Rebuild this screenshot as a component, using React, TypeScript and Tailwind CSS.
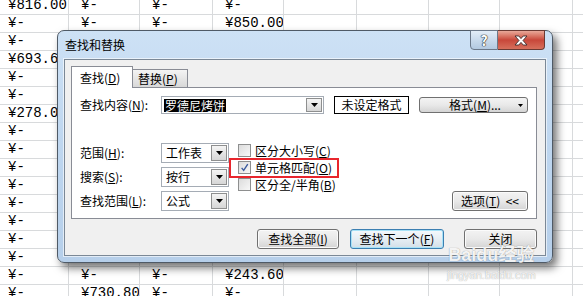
import React from "react";

const colWidths = [69, 71, 73, 71, 73, 72, 71, 73];

// cells behind the dialog are left blank ("")
const sheet: string[][] = [
  ["816.00", "-", "-", "-"],
  ["-", "-", "-", "850.00"],
  ["-", "", "", ""],
  ["693.60", "", "", ""],
  ["-", "", "", ""],
  ["-", "", "", ""],
  ["278.00", "", "", ""],
  ["-", "", "", ""],
  ["-", "", "", ""],
  ["-", "", "", ""],
  ["-", "", "", ""],
  ["-", "", "", ""],
  ["-", "", "", ""],
  ["-", "", "", ""],
  ["-", "", "", ""],
  ["-", "-", "-", "243.60"],
  ["-", "730.80", "-", "-"],
];

// label with accelerator key, e.g. 查找(D)
function Lbl({ t, k, tail }: { t: string; k?: string; tail?: string }) {
  return (
    <span className="whitespace-nowrap">
      <span>{t}</span>
      {k && (
        <>
          <span>(</span>
          <span className="underline underline-offset-1">{k}</span>
          <span>)</span>
        </>
      )}
      {tail && <span>{tail}</span>}
    </span>
  );
}

function DropArrow() {
  return (
    <div className="flex h-full w-[16px] items-center justify-center border border-[#8e8f8f] bg-gradient-to-b from-[#f4f4f4] to-[#d6d6d6]">
      <svg width="7" height="4" viewBox="0 0 7 4">
        <polygon points="0,0 7,0 3.5,4" fill="#000" />
      </svg>
    </div>
  );
}

function Combo({ value }: { value: string }) {
  return (
    <div className="flex h-[20px] w-[68px] items-stretch border border-[#a5acb5] bg-white p-[1px]">
      <div className="flex-1 pl-[3px] text-[12px] leading-[16px]">{value}</div>
      <DropArrow />
    </div>
  );
}

function Check({ checked, children }: { checked?: boolean; children: React.ReactNode }) {
  return (
    <div className="flex h-[17px] items-center gap-[4px]">
      <div className="flex h-[13px] w-[13px] items-center justify-center border border-[#8e8f8f] bg-gradient-to-br from-[#dcdcdc] to-[#f8f8f8] p-[1px]">
        {checked && (
          <svg width="11" height="11" viewBox="0 0 11 11">
            <path d="M2 6 L4.5 9 L9.5 1.5" fill="none" stroke="#3a5a9e" strokeWidth="1.7" />
          </svg>
        )}
      </div>
      <div className="text-[12px] leading-[14px]">{children}</div>
    </div>
  );
}

function Btn({ w, focus, children }: { w: string; focus?: boolean; children: React.ReactNode }) {
  return (
    <div
      className={
        focus
          ? `flex h-[20px] ${w} items-center justify-center rounded-[3px] border border-[#3c7fb1] bg-gradient-to-b from-[#f5f9fc] via-[#e6eef4] to-[#d3dfe8] text-[12px] shadow-[inset_0_0_0_1px_#a7e2f7]`
          : `flex h-[20px] ${w} items-center justify-center rounded-[3px] border border-[#707070] bg-gradient-to-b from-[#f3f3f3] via-[#e9e9e9] to-[#d4d4d4] text-[12px] shadow-[inset_0_0_0_1px_#fbfbfb]`
      }
    >
      {children}
    </div>
  );
}

export default function App() {
  return (
    <div className="relative h-[296px] w-[583px] overflow-hidden bg-white font-['Noto_Sans_CJK_SC',sans-serif] text-black">
      {/* sheet */}
      <div className="-mt-[3px] grid grid-cols-[69px_71px_73px_71px_73px_72px_71px_73px_1fr] font-['Liberation_Mono',monospace] text-[14px]">
        {sheet.map((row, r) =>
          [...colWidths, 0].map((_, c) => (
            <div
              key={`${r}-${c}`}
              className={`h-[18px] overflow-hidden whitespace-nowrap border-r border-b border-[#d8dadc] leading-[17px] ${c === 0 ? "pl-[8px]" : "pl-[12px]"}`}
            >
              {c < 4 && row[c] ? `¥${row[c]}` : ""}
            </div>
          ))
        )}
      </div>

      {/* dialog */}
      <div className="absolute left-[57px] top-[30px] flex h-[233px] w-[496px] flex-col rounded-[7px] border border-[#4f5a66] bg-gradient-to-b from-[#cde1f5] via-[#bed6ef] to-[#b6cfea] shadow-[4px_5px_9px_rgba(0,0,0,0.55)]">
        <div className="flex h-[28px] shrink-0 items-start justify-between">
          <div className="self-center pl-[7px] text-[12px] leading-[14px]">查找和替换</div>
          <div className="-mt-[1px] mr-[7px] flex h-[20px]">
            <div className="flex w-[28px] items-center justify-center rounded-bl-[4px] border border-[#6b7889] bg-gradient-to-b from-[#e3edf7] via-[#c9daec] to-[#b3c9e0] text-[14px] font-bold leading-none text-white [text-shadow:0_0_1px_#222,0_0_1px_#222,0_0_1px_#222]">
              ?
            </div>
            <div className="flex w-[47px] items-center justify-center rounded-br-[4px] border border-l-0 border-[#6b3a33] bg-gradient-to-b from-[#e8a899] via-[#c8473a] to-[#d66f5c]">
              <svg width="14" height="11" viewBox="0 0 14 11">
                <path
                  d="M1 1 H4.8 L7 3.6 L9.2 1 H13 L9 5.5 L13 10 H9.2 L7 7.4 L4.8 10 H1 L5 5.5 Z"
                  fill="#fff"
                  stroke="#3b2a2a"
                  strokeWidth="0.9"
                />
              </svg>
            </div>
          </div>
        </div>

        <div className="mx-[6px] mb-[6px] flex flex-1 flex-col border border-[#7b8896] bg-[#f0f0f0] pl-[6px] pr-[8px] pt-[6px] shadow-[0_0_0_1px_rgba(255,255,255,0.6)]">
          {/* tabs */}
          <div className="flex h-[21px] items-end">
            <div className="relative z-10 -mb-[1px] h-[22px] w-[62px] border border-b-0 border-[#898c95] bg-white pl-[8px] pt-[4px] text-[12px] leading-[14px]">
              <Lbl t="查找" k="D" />
            </div>
            <div className="h-[18px] w-[55px] border border-b-0 border-l-0 border-[#898c95] bg-gradient-to-b from-[#f4f4f4] to-[#d8d8d8] pl-[5px] pt-[2px] text-[12px] leading-[14px]">
              <Lbl t="替换" k="P" />
            </div>
          </div>

          {/* panel */}
          <div className="h-[132px] border border-[#898c95] bg-white px-[8px] pt-[8px]">
            <div className="flex h-[18px] items-center text-[12px]">
              <div className="w-[81px]">
                <Lbl t="查找内容" k="N" tail=":" />
              </div>
              <div className="flex h-[18px] w-[163px] items-stretch border border-[#a5acb5] bg-white p-[1px]">
                <div className="flex flex-1 items-center pl-[1px]">
                  <span className="bg-black px-[1px] leading-[13px] text-white">罗德尼烤饼</span>
                </div>
                <DropArrow />
              </div>
              <div className="ml-[10px] flex h-[18px] w-[75px] items-center justify-center border border-black bg-white">
                未设定格式
              </div>
              <div className="ml-[10px] flex h-[16px] w-[109px] items-center rounded-[3px] border border-[#707070] bg-gradient-to-b from-[#f3f3f3] via-[#e9e9e9] to-[#d4d4d4] pr-[4px]">
                <div className="flex-1 pl-[12px] text-center">
                  <Lbl t="格式" k="M" tail="..." />
                </div>
                <svg width="5" height="3" viewBox="0 0 5 3">
                  <polygon points="0,0 5,0 2.5,3" fill="#000" />
                </svg>
              </div>
            </div>

            <div className="mt-[29px] flex items-end">
              <div className="flex flex-col gap-[4px] text-[12px]">
                <div className="flex items-center">
                  <div className="w-[81px]">
                    <Lbl t="范围" k="H" tail=":" />
                  </div>
                  <Combo value="工作表" />
                </div>
                <div className="flex items-center">
                  <div className="w-[81px]">
                    <Lbl t="搜索" k="S" tail=":" />
                  </div>
                  <Combo value="按行" />
                </div>
                <div className="flex items-center">
                  <div className="w-[81px]">
                    <Lbl t="查找范围" k="L" tail=":" />
                  </div>
                  <Combo value="公式" />
                </div>
              </div>

              <div className="ml-[9px] -mt-[1px] flex flex-col self-start">
                <Check>
                  <Lbl t="区分大小写" k="C" />
                </Check>
                <div className="relative">
                  <Check checked>
                    <Lbl t="单元格匹配" k="O" />
                  </Check>
                  <div className="absolute -left-[9px] -top-[1px] h-[20px] w-[110px] border-2 border-[#e8262d]" />
                </div>
                <Check>
                  <Lbl t="区分全/半角" k="B" />
                </Check>
              </div>

              <div className="ml-auto">
                <Btn w="w-[76px]">
                  <Lbl t="选项" k="T" tail={"\u00a0\u00a0<<"} />
                </Btn>
              </div>
            </div>
          </div>

          {/* buttons */}
          <div className="mt-[10px] flex justify-end">
            <Btn w="w-[82px]">
              <Lbl t="查找全部" k="I" />
            </Btn>
            <div className="ml-[11px]">
              <Btn w="w-[94px]" focus>
                <Lbl t="查找下一个" k="F" />
              </Btn>
            </div>
            <div className="ml-[20px]">
              <Btn w="w-[73px]">关闭</Btn>
            </div>
          </div>
        </div>
      </div>

      {/* watermark */}
      <div className="pointer-events-none absolute left-[447px] top-[243px] flex flex-col items-center text-white/90 [text-shadow:0_0_1px_rgba(0,0,0,0.45)]">
        <div className="whitespace-nowrap font-['Liberation_Sans',sans-serif] text-[18px] font-bold leading-[20px]">
          <span>Baidu</span>
          <span className="font-['Noto_Sans_CJK_SC',sans-serif]">经验</span>
        </div>
        <div className="mt-[4px] font-['Liberation_Sans',sans-serif] text-[11px] leading-[12px]">jingyan.baidu.com</div>
      </div>
    </div>
  );
}
